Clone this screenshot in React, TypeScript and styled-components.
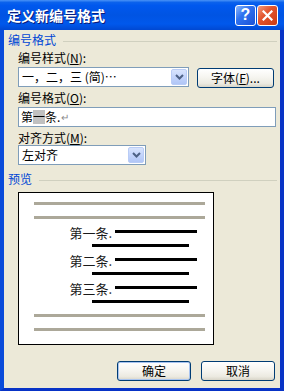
import React from 'react';
import styled, { createGlobalStyle } from 'styled-components';

const Global = createGlobalStyle`
  html, body { margin: 0; padding: 0; background: #ECE9D8; }
  body { font-family: "Noto Sans CJK SC", "Liberation Sans", sans-serif; font-size: 12px; color: #000; }
  * { box-sizing: border-box; }
`;

const Window = styled.div`
  width: 284px;
  height: 391px;
  display: flex;
  flex-direction: column;
  overflow: hidden;
`;

const TitleBar = styled.div`
  height: 30px;
  flex: none;
  display: flex;
  align-items: center;
  justify-content: space-between;
  padding: 0 6px 0 7px;
  background: linear-gradient(
    180deg,
    #4A93F7 0%,
    #0B62EC 8%,
    #0058EE 18%,
    #0054E3 50%,
    #0058EC 80%,
    #0048D2 100%
  );
`;

const Title = styled.div`
  color: #fff;
  font-size: 14px;
  font-weight: bold;
  line-height: 16px;
  text-shadow: 1px 1px 0 #0A1B7A;
`;

const TitleButtons = styled.div`
  display: flex;
  gap: 1px;
`;

const CaptionButton = styled.div<{ $kind: 'help' | 'close' }>`
  width: 21px;
  height: 21px;
  border: 1px solid #fff;
  border-radius: 3px;
  display: flex;
  align-items: center;
  justify-content: center;
  background: ${(p) =>
    p.$kind === 'close'
      ? 'linear-gradient(135deg, #F29B7C 0%, #E3552F 40%, #CC3A12 100%)'
      : 'linear-gradient(135deg, #8CB6FA 0%, #2F72F0 40%, #1A52D6 100%)'};
  color: #fff;
  font-family: "Liberation Sans", sans-serif;
  font-weight: bold;
  font-size: 16px;
  line-height: 1;
`;

const Frame = styled.div`
  flex: 1;
  display: flex;
  flex-direction: column;
  background: #ECE9D8;
  border-left: 4px solid #0A4BDA;
  border-right: 4px solid #0833C6;
  border-bottom: 3px solid #0833C6;
  padding: 0 3px 0 4px;
`;

const GroupHeader = styled.div<{ $mt: number }>`
  display: flex;
  align-items: center;
  height: 14px;
  margin-top: ${(p) => p.$mt}px;
`;

const GroupLabel = styled.span`
  color: #0046D5;
  font-size: 12px;
  line-height: 14px;
`;

const GroupLine = styled.div`
  flex: 1;
  height: 1px;
  margin-left: 7px;
  margin-top: 2px;
  background: #D0D0BF;
`;

const Section = styled.div`
  display: flex;
  flex-direction: column;
  padding: 0 1px 0 10px;
`;

const Label = styled.div<{ $mt: number }>`
  font-size: 12px;
  line-height: 14px;
  height: 14px;
  margin-top: ${(p) => p.$mt}px;
`;

const Key = styled.span`
  text-decoration: underline;
`;

const ComboRow = styled.div<{ $mt: number }>`
  display: flex;
  align-items: flex-start;
  gap: 8px;
  margin-top: ${(p) => p.$mt}px;
`;

const Combo = styled.div<{ $w: number }>`
  width: ${(p) => p.$w}px;
  height: 20px;
  border: 1px solid #7F9DB9;
  background: #fff;
  display: flex;
  align-items: center;
  padding: 1px;
`;

const ComboText = styled.span`
  flex: 1;
  padding-left: 2px;
  line-height: 14px;
  white-space: nowrap;
`;

const DropButton = styled.div`
  width: 16px;
  height: 16px;
  flex: none;
  border-radius: 2px;
  border: 1px solid #B9CCF6;
  background: linear-gradient(180deg, #D8E4FD 0%, #C3D4FB 50%, #B1C6F6 100%);
  display: flex;
  align-items: center;
  justify-content: center;
`;

const XPButton = styled.div<{ $w: number; $default?: boolean }>`
  width: ${(p) => p.$w}px;
  height: 20px;
  border: 1px solid #003C74;
  border-radius: 3px;
  background: linear-gradient(180deg, #FFFFFF 0%, #F6F5F0 45%, #ECEAE1 80%, #D8D5C8 100%);
  box-shadow: ${(p) => (p.$default ? 'inset 0 0 0 1px #A8C4F0' : 'none')};
  display: flex;
  align-items: center;
  justify-content: center;
  font-size: 12px;
  line-height: 14px;
  flex: none;
`;

const FontButton = styled(XPButton)`
  margin-top: 1px;
`;

const TextField = styled.div`
  height: 20px;
  margin-top: 2px;
  border: 1px solid #7F9DB9;
  background: #fff;
  display: flex;
  align-items: center;
  padding-left: 2px;
  line-height: 14px;
`;

const Highlight = styled.span`
  background: #C0C0C0;
`;

const ReturnMark = styled.span`
  color: #8A8A8A;
  font-size: 10px;
  margin-left: 1px;
`;

const PreviewBox = styled.div`
  width: 196px;
  height: 153px;
  margin: 6px 0 0 10px;
  border: 1px solid #000;
  background: #fff;
  display: flex;
  flex-direction: column;
  padding: 3px 0 0 15px;
`;

const PreviewRow = styled.div`
  height: 14px;
  flex: none;
  display: flex;
  align-items: flex-start;
`;

const GrayBar = styled.div`
  width: 171px;
  height: 3px;
  margin-top: 6px;
  background: #ACA899;
`;

const ItemRow = styled.div`
  height: 14px;
  flex: none;
  display: grid;
  grid-template-columns: 81px 82px;
  align-items: start;
`;

const ItemText = styled.span`
  text-align: right;
  padding-right: 3px;
  margin-top: 1px;
  line-height: 15px;
  font-size: 13px;
  color: #1A1A1A;
  white-space: nowrap;
`;

const BlackBar = styled.div<{ $w: number }>`
  width: ${(p) => p.$w}px;
  height: 3px;
  margin-top: 6px;
  background: #000;
`;

const SubRow = styled(PreviewRow)`
  padding-left: 58px;
`;

const ButtonRow = styled.div`
  display: flex;
  justify-content: flex-end;
  gap: 10px;
  margin-top: 16px;
  padding-right: 2px;
`;

const Chevron = () => (
  <svg width="9" height="6" viewBox="0 0 9 6">
    <path d="M1 1 L4.5 4.5 L8 1" fill="none" stroke="#4D6185" strokeWidth="2" />
  </svg>
);

const CloseIcon = () => (
  <svg width="11" height="11" viewBox="0 0 11 11">
    <path d="M1.5 1.5 L9.5 9.5 M9.5 1.5 L1.5 9.5" stroke="#fff" strokeWidth="2.2" strokeLinecap="square" />
  </svg>
);

const items = ['第一条.', '第二条.', '第三条.'];

export default function App() {
  return (
    <>
      <Global />
      <Window>
        <TitleBar>
          <Title>定义新编号格式</Title>
          <TitleButtons>
            <CaptionButton $kind="help">?</CaptionButton>
            <CaptionButton $kind="close">
              <CloseIcon />
            </CaptionButton>
          </TitleButtons>
        </TitleBar>
        <Frame>
          <GroupHeader $mt={3}>
            <GroupLabel>编号格式</GroupLabel>
            <GroupLine />
          </GroupHeader>
          <Section>
            <Label $mt={4}>
              编号样式(<Key>N</Key>):
            </Label>
            <ComboRow $mt={2}>
              <Combo $w={171}>
                <ComboText>一，二，三 (简)…</ComboText>
                <DropButton>
                  <Chevron />
                </DropButton>
              </Combo>
              <FontButton $w={77}>
                字体(<Key>F</Key>)...
              </FontButton>
            </ComboRow>
            <Label $mt={3}>
              编号格式(<Key>O</Key>):
            </Label>
            <TextField>
              第<Highlight>一</Highlight>条.<ReturnMark>↵</ReturnMark>
            </TextField>
            <Label $mt={4}>
              对齐方式(<Key>M</Key>):
            </Label>
            <ComboRow $mt={0}>
              <Combo $w={128}>
                <ComboText>左对齐</ComboText>
                <DropButton>
                  <Chevron />
                </DropButton>
              </Combo>
            </ComboRow>
          </Section>
          <GroupHeader $mt={7}>
            <GroupLabel>预览</GroupLabel>
            <GroupLine />
          </GroupHeader>
          <PreviewBox>
            <PreviewRow>
              <GrayBar />
            </PreviewRow>
            <PreviewRow>
              <GrayBar />
            </PreviewRow>
            {items.map((t) => (
              <React.Fragment key={t}>
                <ItemRow>
                  <ItemText>{t}</ItemText>
                  <BlackBar $w={82} />
                </ItemRow>
                <SubRow>
                  <BlackBar $w={97} />
                </SubRow>
              </React.Fragment>
            ))}
            <PreviewRow>
              <GrayBar />
            </PreviewRow>
            <PreviewRow>
              <GrayBar />
            </PreviewRow>
          </PreviewBox>
          <ButtonRow>
            <XPButton $w={74} $default>确定</XPButton>
            <XPButton $w={74}>取消</XPButton>
          </ButtonRow>
        </Frame>
      </Window>
    </>
  );
}
